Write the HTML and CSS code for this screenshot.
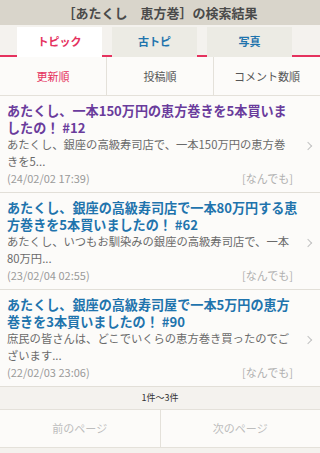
FILE: index.html
```html
<!DOCTYPE html>
<html lang="ja">
<head>
<meta charset="utf-8">
<link rel="stylesheet" href="styles.css">
</head>
<body>
<header class="page-head">［あたくし　恵方巻］の検索結果</header>
<nav class="tabs">
  <div class="tab active">トピック</div>
  <div class="tab">古トピ</div>
  <div class="tab">写真</div>
</nav>
<div class="sorts">
  <div class="sort active">更新順</div>
  <div class="sort">投稿順</div>
  <div class="sort">コメント数順</div>
</div>
<ul class="list">
  <li class="item visited">
    <div class="title">あたくし、一本150万円の恵方巻きを5本買いましたの！ #12</div>
    <div class="desc">あたくし、銀座の高級寿司店で、一本150万円の恵方巻きを5...</div>
    <div class="meta"><span class="date">(24/02/02 17:39)</span><span class="cat">[なんでも]</span></div>
    <span class="chev"></span>
  </li>
  <li class="item">
    <div class="title">あたくし、銀座の高級寿司店で一本80万円する恵方巻きを5本買いましたの！ #62</div>
    <div class="desc">あたくし、いつもお馴染みの銀座の高級寿司店で、一本80万円...</div>
    <div class="meta"><span class="date">(23/02/04 02:55)</span><span class="cat">[なんでも]</span></div>
    <span class="chev"></span>
  </li>
  <li class="item">
    <div class="title">あたくし、銀座の高級寿司屋で一本5万円の恵方巻きを3本買いましたの！ #90</div>
    <div class="desc">庶民の皆さんは、どこでいくらの恵方巻き買ったのでございます...</div>
    <div class="meta"><span class="date">(22/02/03 23:06)</span><span class="cat">[なんでも]</span></div>
    <span class="chev"></span>
  </li>
</ul>
<div class="count">1件〜3件</div>
<div class="pager">
  <div class="pbtn">前のページ</div>
  <div class="pbtn">次のページ</div>
</div>
</body>
</html>
```
FILE: styles.css
```css
* { box-sizing: border-box; }
html, body { margin: 0; padding: 0; }
body {
  background: #f4f2ee;
  font-family: "Noto Sans CJK JP", "Noto Sans", sans-serif;
  color: #555;
  width: 320px;
  overflow: hidden;
}
.page-head {
  height: 25px;
  background: #d9d5cb;
  color: #4a4a4a;
  font-weight: bold;
  font-size: 13px;
  line-height: 25px;
  text-align: center;
}
.tabs {
  display: flex;
  gap: 10px;
  padding: 2px 0 0 17px;
  height: 32px;
  border-bottom: 2px solid #e5325e;
  background: #f4f2ee;
}
.tab {
  width: 85px;
  height: 30px;
  background: #ecebe4;
  color: #1f74ad;
  font-size: 11px;
  font-weight: bold;
  line-height: 28px;
  text-align: center;
}
.tab.active { background: #fff; color: #e5325e; }
.sorts {
  display: flex;
  height: 39px;
  background: #fcfbf9;
  border-bottom: 1px solid #e4e1da;
}
.sort {
  flex: 1;
  font-size: 11px;
  line-height: 38px;
  text-align: center;
  color: #555;
  border-right: 1px solid #e4e1da;
}
.sort:last-child { border-right: 0; }
.sort.active { color: #e5325e; }
.list { list-style: none; margin: 0; padding: 0; }
.item {
  position: relative;
  background: #fcfbf9;
  padding: 6px 22px 5px 7px;
  border-bottom: 1px solid #e2dfd8;
}
.title {
  font-size: 13.1px;
  font-weight: bold;
  line-height: 17px;
  color: #1f74ad;
  width: 291px;
}
.visited .title { color: #6a3c9c; }
.desc {
  font-size: 11.3px;
  line-height: 17px;
  color: #6a6a6a;
  width: 288px;
}
.meta {
  display: flex;
  justify-content: space-between;
  font-size: 11px;
  line-height: 17px;
  width: 286px;
}
.date { color: #9a9a9a; }
.cat { color: #b0b0b0; }
.chev {
  position: absolute;
  right: 9px;
  top: 47px;
  width: 6px;
  height: 6px;
  border-top: 1px solid #c2c2c2;
  border-right: 1px solid #c2c2c2;
  transform: rotate(45deg);
}
.count {
  height: 23px;
  line-height: 22px;
  font-size: 9px;
  color: #333;
  text-align: center;
  background: #f4f2ee;
  border-bottom: 1px solid #e4e1da;
}
.pager {
  display: flex;
  height: 38px;
  border-bottom: 1px solid #e4e1da;
}
.pbtn {
  flex: 1;
  background: #fcfbf9;
  color: #bdbdbd;
  font-size: 11px;
  line-height: 37px;
  text-align: center;
  border-right: 1px solid #e4e1da;
}
.pbtn:last-child { border-right: 0; }
```
